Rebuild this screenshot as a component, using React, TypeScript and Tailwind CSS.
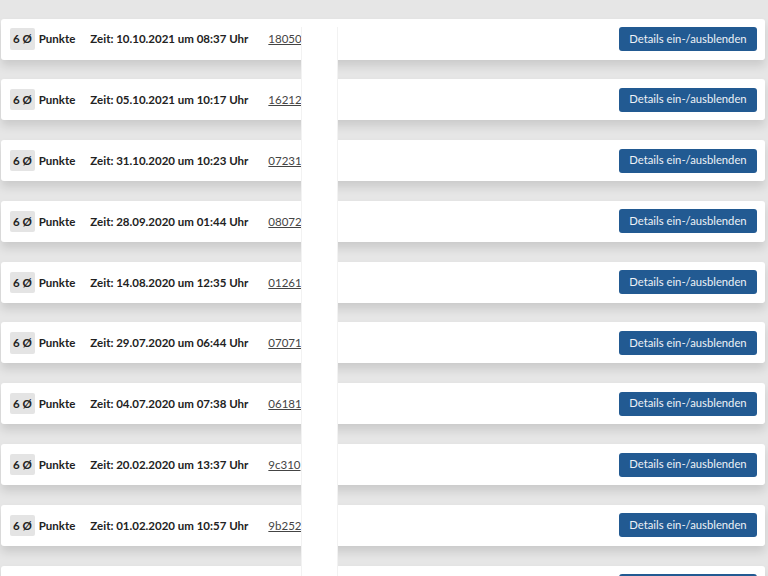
import React from "react";

const rows = [
  { time: "10.10.2021 um 08:37 Uhr", id: "18050" },
  { time: "05.10.2021 um 10:17 Uhr", id: "16212" },
  { time: "31.10.2020 um 10:23 Uhr", id: "07231" },
  { time: "28.09.2020 um 01:44 Uhr", id: "08072" },
  { time: "14.08.2020 um 12:35 Uhr", id: "01261" },
  { time: "29.07.2020 um 06:44 Uhr", id: "07071" },
  { time: "04.07.2020 um 07:38 Uhr", id: "06181" },
  { time: "20.02.2020 um 13:37 Uhr", id: "9c310" },
  { time: "01.02.2020 um 10:57 Uhr", id: "9b252" },
  { time: "15.01.2020 um 09:12 Uhr", id: "8a114" },
];

const App = () => {
  return (
    <div className="relative h-[576px] w-[768px] overflow-hidden bg-[#e6e6e6] font-['Lato','Noto_Sans',sans-serif]">
      <div className="flex flex-col gap-[19.8px] pt-[18.5px] pl-[1px] pr-[3px]">
        {rows.map((r) => (
          <div
            key={r.id}
            className="flex h-[41px] items-center rounded-[3px] bg-white pl-[9px] pr-[8px] shadow-[0_6px_10px_rgba(0,0,0,0.12)]"
          >
            <span className="rounded-[2px] bg-[#e4e4e4] px-[3px] py-[2px] text-[11.5px] font-bold text-[#222]">
              6 Ø
            </span>
            <span className="ml-[4px] text-[11.5px] font-bold text-[#222]">Punkte</span>
            <span className="ml-[15px] text-[11.5px] font-bold text-[#222]">Zeit: {r.time}</span>
            <a href="#!" className="ml-[20px] text-[11.5px] text-[#444] underline">
              {r.id}
            </a>
            <button
              type="button"
              className="ml-auto h-[24px] w-[138px] rounded-[3px] bg-[#225a92] text-[11.25px] text-[#eef2f7]"
            >
              Details ein-/ausblenden
            </button>
          </div>
        ))}
      </div>

      {/* overlay strip */}
      <div className="absolute left-[301px] top-[27px] h-[560px] w-[37px] border-x border-[#f2f2f2] bg-white" />
    </div>
  );
};

export default App;
